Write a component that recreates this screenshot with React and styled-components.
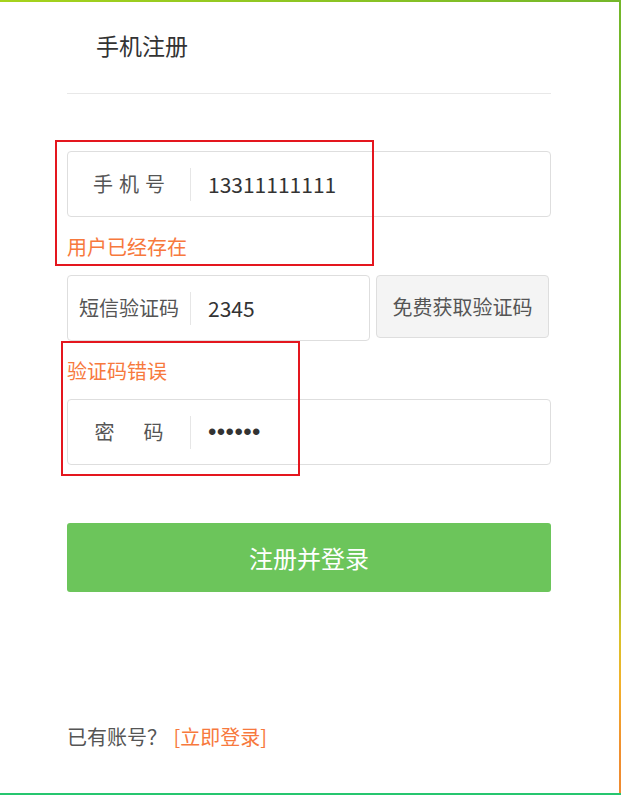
import React from "react";
import styled, { createGlobalStyle } from "styled-components";

const Global = createGlobalStyle`
  html, body { margin: 0; padding: 0; background: #fff; }
  body { font-family: "Noto Sans CJK SC", "Noto Sans", sans-serif; }
  * { box-sizing: border-box; }
`;

const Frame = styled.div`
  position: relative;
  width: 621px;
  height: 795px;
  background:
    linear-gradient(to right, #a6d31c, #74b72a) top left / 100% 2px no-repeat,
    linear-gradient(#26c66f, #26c66f) bottom left / 100% 2px no-repeat,
    linear-gradient(
        to bottom,
        #74b72a 0%,
        #74b72a 70%,
        #d9c22a 80%,
        #f2b12c 86%,
        #f0902f 94%,
        #ef8a30 100%
      )
      top right / 2px 100% no-repeat,
    #fff;
  overflow: hidden;
`;

const Content = styled.div`
  display: flex;
  flex-direction: column;
  padding: 0 70px 0 67px;
`;

const Header = styled.div`
  padding: 30px 0 33px 29px;
  border-bottom: 1px solid #e8e8e8;
`;

const Title = styled.h1`
  margin: 0;
  font-size: 23px;
  line-height: 30px;
  font-weight: 400;
  color: #333;
`;

const Form = styled.div`
  display: flex;
  flex-direction: column;
  margin-top: 57px;
`;

const Row = styled.div`
  display: flex;
  align-items: flex-start;
  gap: 6px;
`;

const Field = styled.div`
  display: flex;
  align-items: center;
  width: ${(p) => p.$width || 484}px;
  height: 66px;
  border: 1px solid #dedede;
  border-radius: 4px;
  background: #fff;
`;

const Label = styled.span`
  width: 122px;
  flex: none;
  display: flex;
  justify-content: center;
  font-size: 20px;
  line-height: 30px;
  color: #555;
  white-space: pre;
`;

const LabelText = styled.span`
  letter-spacing: ${(p) => p.$spacing || 0}px;
  margin-right: -${(p) => p.$spacing || 0}px;
`;

const Divider = styled.span`
  width: 1px;
  height: 33px;
  background: #e6e6e6;
  flex: none;
`;

const Value = styled.span`
  padding-left: 17px;
  font-size: 21px;
  line-height: 30px;
  color: #333;
`;

const Dots = styled(Value)`
  font-family: "Liberation Sans", sans-serif;
  font-size: 24px;
  letter-spacing: 0.4px;
  color: #333;
`;

const CodeButton = styled.button`
  width: 173px;
  height: 63px;
  border: 1px solid #dedede;
  border-radius: 4px;
  background: #f4f4f4;
  font-family: inherit;
  font-size: 20px;
  color: #555;
  padding: 0;
`;

const ErrorSlot = styled.div`
  height: 58px;
  padding-top: 15px;
  font-size: 20px;
  line-height: 30px;
  color: #f7793d;
`;

const Submit = styled.button`
  width: 484px;
  height: 69px;
  border: none;
  border-radius: 3px;
  background: #6cc55b;
  color: #fff;
  font-family: inherit;
  font-size: 24px;
  padding: 0;
`;

const Footer = styled.div`
  margin-top: 130px;
  font-size: 20px;
  line-height: 30px;
  color: #555;
`;

const Link = styled.a`
  color: #f7793d;
  text-decoration: none;
  margin-left: 2px;
`;

const Annotation = styled.div`
  position: absolute;
  left: ${(p) => p.$x}px;
  top: ${(p) => p.$y}px;
  width: ${(p) => p.$w}px;
  height: ${(p) => p.$h}px;
  border: 2px solid #e4161e;
  pointer-events: none;
`;

export default function App() {
  return (
    <>
      <Global />
      <Frame>
        <Content>
          <Header>
            <Title>手机注册</Title>
          </Header>
          <Form>
            <Field>
              <Label>
                <LabelText $spacing={6}>手机号</LabelText>
              </Label>
              <Divider />
              <Value>13311111111</Value>
            </Field>
            <ErrorSlot>用户已经存在</ErrorSlot>
            <Row>
              <Field $width={303}>
                <Label>
                  <LabelText>短信验证码</LabelText>
                </Label>
                <Divider />
                <Value>2345</Value>
              </Field>
              <CodeButton>免费获取验证码</CodeButton>
            </Row>
            <ErrorSlot>验证码错误</ErrorSlot>
            <Field>
              <Label>
                <LabelText $spacing={29}>密码</LabelText>
              </Label>
              <Divider />
              <Dots>••••••</Dots>
            </Field>
            <ErrorSlot />
            <Submit>注册并登录</Submit>
          </Form>
          <Footer>
            已有账号？ <Link href="#">[立即登录]</Link>
          </Footer>
        </Content>
        <Annotation $x={55} $y={140} $w={319} $h={126} />
        <Annotation $x={61} $y={341} $w={239} $h={135} />
      </Frame>
    </>
  );
}
